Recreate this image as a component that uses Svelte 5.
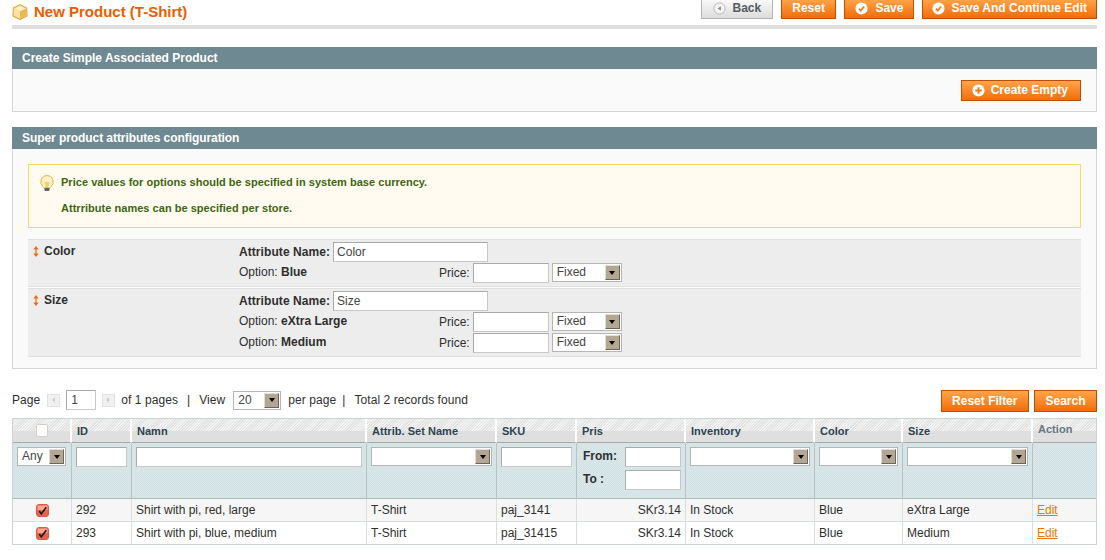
<script lang="ts">
  const rows = [
    { id: 292, name: 'Shirt with pi, red, large', set: 'T-Shirt', sku: 'paj_3141', price: 'SKr3.14', stock: 'In Stock', color: 'Blue', size: 'eXtra Large' },
    { id: 293, name: 'Shirt with pi, blue, medium', set: 'T-Shirt', sku: 'paj_31415', price: 'SKr3.14', stock: 'In Stock', color: 'Blue', size: 'Medium' }
  ];
  const heads = [
    ['ID', 'c-id'],
    ['Namn', 'c-name'],
    ['Attrib. Set Name', 'c-set'],
    ['SKU', 'c-sku'],
    ['Pris', 'c-price'],
    ['Inventory', 'c-stock'],
    ['Color', 'c-color'],
    ['Size', 'c-size']
  ];
</script>

{#snippet select(label: string, cls: string)}
  <span class="select {cls}">
    <span class="select-text">{label}</span>
    <span class="select-btn"><i></i></span>
  </span>
{/snippet}

{#snippet sorter()}
  <svg class="sorter" viewBox="0 0 6 11" width="6" height="11">
    <path d="M3 0 5.6 3.4H.4zM3 11 .4 7.6h5.2z" fill="#f26a0c" />
    <rect x="2.4" y="3" width="1.2" height="5" fill="#f26a0c" />
  </svg>
{/snippet}

{#snippet tick()}
  <svg class="ico" viewBox="0 0 14 14" width="13" height="13">
    <circle cx="7" cy="7" r="6.5" fill="#fff" />
    <path d="M4.2 7.2 6.2 9.4 9.8 4.8" fill="none" stroke="#ec7a14" stroke-width="1.8" />
  </svg>
{/snippet}

<div class="page">
  <header class="top">
    <h3>
      <svg viewBox="0 0 16 16" width="16" height="16">
        <path d="M8 .7 14.6 3.9 15 12 8 15.4 1 12 1.4 3.9z" fill="#f3cb74" stroke="#dca945" stroke-width="1.1" stroke-linejoin="round" />
        <path d="M2.2 4.4 8 7.2 13.8 4.4 8 1.6z" fill="#fdf0c4" />
        <path d="M8 7.6V14.4L2 11.5V5z" fill="#fae3a6" />
        <path d="M8 7.6V14.4l6-2.9V5z" fill="#ecb950" />
      </svg>
      New Product (T-Shirt)
    </h3>
    <div class="actions">
      <button class="btn back">
        <svg class="ico" viewBox="0 0 14 14" width="13" height="13">
          <circle cx="7" cy="7" r="6" fill="#f4f4f4" stroke="#b5b5b5" />
          <path d="M8.5 4.5v5L5 7z" fill="#8a8a8a" />
        </svg>
        Back
      </button>
      <button class="btn reset">Reset</button>
      <button class="btn">{@render tick()} Save</button>
      <button class="btn wide">{@render tick()} Save And Continue Edit</button>
    </div>
  </header>

  <section class="box first">
    <h4>Create Simple Associated Product</h4>
    <div class="box-body create">
      <button class="btn">
        <svg class="ico" viewBox="0 0 14 14" width="13" height="13">
          <circle cx="7" cy="7" r="6.5" fill="#fff" />
          <path d="M7 3.5v7M3.500 7h7" stroke="#ec7a14" stroke-width="2" />
        </svg>
        Create Empty
      </button>
    </div>
  </section>

  <section class="box second">
    <h4>Super product attributes configuration</h4>
    <div class="box-body config">
      <div class="notice">
        <svg class="bulb" viewBox="0 0 14 16" width="14" height="16">
          <path d="M7 .6a6.3 6.300 0 0 0-4 11.100c.7.600 1 1 1 1.500h6c0-.5.300-.9 1-1.500A6.300 6.300 0 0 0 7 .6z" fill="#fef3c4" stroke="#eab04a" />
          <path d="M4.500 7.500C5 10 5.500 11 6 12.500h2c.5-1.500 1-2.500 1.500-5-1.500-1-3.500-1-5 0z" fill="#f9cf6a" />
          <rect x="4.500" y="12.800" width="5" height="3.200" rx="1" fill="#5e6263" />
        </svg>
        <div class="notice-text">
          <p>Price values for options should be specified in system base currency.</p>
          <p>Attrribute names can be specified per store.</p>
        </div>
      </div>

      <div class="attr">
        <div class="attr-title">{@render sorter()}<b>Color</b></div>
        <div class="attr-fields">
          <div class="attr-name"><b>Attribute Name:</b><span class="input name-input">Color</span></div>
          <div class="opt">
            <span class="opt-label">Option: <b>Blue</b></span>
            <span class="price-label">Price:</span><span class="input price-input"></span>
            {@render select('Fixed', 's-fixed')}
          </div>
        </div>
      </div>
      <div class="attr">
        <div class="attr-title">{@render sorter()}<b>Size</b></div>
        <div class="attr-fields">
          <div class="attr-name"><b>Attribute Name:</b><span class="input name-input">Size</span></div>
          <div class="opt">
            <span class="opt-label">Option: <b>eXtra Large</b></span>
            <span class="price-label">Price:</span><span class="input price-input"></span>
            {@render select('Fixed', 's-fixed')}
          </div>
          <div class="opt">
            <span class="opt-label">Option: <b>Medium</b></span>
            <span class="price-label">Price:</span><span class="input price-input"></span>
            {@render select('Fixed', 's-fixed')}
          </div>
        </div>
      </div>
    </div>
  </section>

  <div class="pager">
    <div class="pager-left">
      <span class="page-word">Page</span>
      <span class="arrow"><i class="left"></i></span>
      <span class="input page-input">1</span>
      <span class="arrow"><i class="right"></i></span>
      <span>of 1 pages</span>
      <span class="sep">|</span>
      <span>View</span>
      {@render select('20', 's-view')}
      <span>per page</span>
      <span class="sep tight">|</span>
      <span>Total 2 records found</span>
    </div>
    <div class="pager-right">
      <button class="btn">Reset Filter</button>
      <button class="btn">Search</button>
    </div>
  </div>

  <table>
    <colgroup>
      <col class="c-check" />
      {#each heads as h}<col class={h[1]} />{/each}
      <col class="c-action" />
    </colgroup>
    <thead>
      <tr class="headings">
        <th class="center"><span class="checkbox-empty"></span></th>
        {#each heads as h}<th>{h[0]}</th>{/each}
        <th class="action-head">Action</th>
      </tr>
      <tr class="filter">
        <th>{@render select('Any', 's-any')}</th>
        <th><span class="input f-input"></span></th>
        <th><span class="input f-input"></span></th>
        <th>{@render select('', 's-full')}</th>
        <th><span class="input f-input"></span></th>
        <th>
          <div class="range"><b>From:</b><span class="input range-input"></span></div>
          <div class="range"><b>To :</b><span class="input range-input"></span></div>
        </th>
        <th>{@render select('', 's-full')}</th>
        <th>{@render select('', 's-full')}</th>
        <th>{@render select('', 's-full')}</th>
        <th></th>
      </tr>
    </thead>
    <tbody>
      {#each rows as r}
        <tr>
          <td class="center">
            <svg class="checked" viewBox="0 0 13 13" width="13" height="13">
              <rect x=".5" y=".5" width="12" height="12" rx="2.500" fill="#ee5f4c" stroke="#dd5a45" />
              <path d="M1.500 2.500a1 1 0 0 1 1-1h8a1 1 0 0 1 1 1v3.500h-10z" fill="#f8a594" />
              <path d="M3.200 7 5.300 9.800 10.300 3.200" fill="none" stroke="#1c1c1c" stroke-width="1.600" />
            </svg>
          </td>
          <td>{r.id}</td>
          <td>{r.name}</td>
          <td>{r.set}</td>
          <td>{r.sku}</td>
          <td class="right">{r.price}</td>
          <td>{r.stock}</td>
          <td>{r.color}</td>
          <td>{r.size}</td>
          <td><span class="edit">Edit</span></td>
        </tr>
      {/each}
    </tbody>
  </table>
</div>

<style>
  :global(body) {
    background: #fff;
  }

  .page {
    height: 560px;
    overflow: hidden;
    padding: 0 8px 0 12px;
    font: 12px/15px "Liberation Sans", Arial, sans-serif;
    color: #2f2f2f;
  }

  b {
    font-weight: bold;
  }

  .ico {
    flex-shrink: 0;
  }

  /* top bar */
  .top {
    display: flex;
    justify-content: space-between;
    align-items: flex-end;
    height: 25px;
    border-bottom: 4px solid #dfdfdf;
    margin-bottom: 18px;
  }

  h3 {
    display: flex;
    align-items: center;
    gap: 6px;
    margin: 0 0 5px;
    height: 16px;
    font-size: 15px;
    line-height: 16px;
    color: #eb5e00;
  }

  .actions {
    display: flex;
    gap: 8px;
    margin-bottom: 6px;
    height: 21px;
    align-self: flex-end;
  }

  .btn {
    display: inline-flex;
    align-items: center;
    justify-content: center;
    gap: 7px;
    height: 21px;
    padding: 0 10px;
    border: 1px solid #c24d00;
    background: linear-gradient(#ffa54a, #f36d0a);
    color: #fff;
    font: bold 12px/15px "Liberation Sans", Arial, sans-serif;
    white-space: nowrap;
  }

  .back {
    border-color: #b4b4b4;
    background: linear-gradient(#fafafa, #dcdcdc);
    color: #555a63;
  }

  .back,
  .reset {
    padding: 0 10.5px;
  }

  .wide {
    padding: 0 9px;
    gap: 6px;
  }

  /* sections */
  .box {
    margin-bottom: 15px;
  }

  .box h4 {
    margin: 0;
    height: 22px;
    padding: 0 10px;
    background: #6f8992;
    color: #fff;
    font-size: 12px;
    line-height: 22px;
  }

  .second h4 {
    letter-spacing: -0.07px;
  }

  .box-body {
    background: #fafafa;
    border: 1px solid #d6d6d6;
    border-top: 0;
  }

  .create {
    display: flex;
    justify-content: flex-end;
    height: 43px;
    box-sizing: border-box;
    padding: 11px 15px 0 0;
  }

  .create .btn {
    gap: 6px;
    padding: 0 12px 0 10px;
  }

  .config {
    height: 220px;
    box-sizing: border-box;
    padding: 15px 15px 0;
  }

  .notice {
    display: flex;
    gap: 7px;
    height: 64px;
    box-sizing: border-box;
    padding: 10px 11px;
    background: #fffbf0;
    border: 1px solid #ffd967;
    margin-bottom: 11px;
  }

  .bulb {
    flex-shrink: 0;
  }

  .notice-text p {
    margin: 0 0 11px;
    color: #3d6611;
    font-size: 11px;
    font-weight: bold;
    line-height: 15px;
    letter-spacing: 0.03px;
  }

  .attr {
    display: flex;
    background: #ededed;
    border: 1px solid #e0e0e0;
    border-width: 1px 0;
    margin-bottom: 1px;
    padding: 2px 0;
  }

  .attr-title {
    display: flex;
    align-items: center;
    align-self: flex-start;
    gap: 5px;
    width: 211px;
    padding: 2px 0 0 5px;
    box-sizing: border-box;
  }

  .attr-name {
    display: flex;
    align-items: flex-start;
    gap: 3px;
    height: 21px;
  }

  .attr-name b {
    line-height: 20px;
    letter-spacing: 0.07px;
  }

  .opt {
    display: flex;
    align-items: flex-start;
    height: 21px;
  }

  .opt-label {
    width: 200px;
    line-height: 18px;
  }

  .price-label {
    margin-right: 3px;
    line-height: 20px;
  }

  /* form bits */
  .input {
    display: inline-block;
    box-sizing: border-box;
    background: #fff;
    border: 1px solid #aaa;
    border-color: #aaa #c8c8c8 #c8c8c8 #aaa;
    padding: 0 3px;
    height: 20px;
    line-height: 18px;
    vertical-align: middle;
    color: #444;
  }

  .name-input {
    width: 155px;
  }

  .price-input {
    width: 76px;
  }

  .select {
    display: inline-flex;
    align-items: center;
    justify-content: space-between;
    box-sizing: border-box;
    height: 19px;
    background: #fff;
    border: 1px solid #b5b5b5;
    padding-left: 4px;
    font-weight: normal;
    line-height: 16px;
    color: #444;
  }

  .select-text {
    flex: 1;
    margin-top: -1px;
  }

  .select-btn {
    display: flex;
    align-items: center;
    justify-content: center;
    width: 15px;
    height: 15px;
    margin-right: 1px;
    background: #b3a692;
    border: 1px solid;
    border-color: #e3ded5 #6d6455 #6d6455 #e3ded5;
    box-sizing: border-box;
  }

  .select-btn i {
    width: 0;
    height: 0;
    border: 3px solid transparent;
    border-top: 4px solid #000;
    border-bottom: 0;
  }

  .s-fixed {
    width: 70px;
    margin-left: 3px;
  }

  .s-view {
    width: 48px;
    margin: 0 1px 0 2px;
  }

  .s-any {
    width: 49px;
  }

  .s-full {
    display: flex;
    width: 100%;
  }

  /* pager */
  .pager {
    display: flex;
    justify-content: space-between;
    align-items: flex-start;
    margin-top: 21px;
    height: 28px;
  }

  .pager-left {
    display: flex;
    align-items: center;
    height: 20px;
    gap: 6px;
    letter-spacing: 0.07px;
  }

  .page-word {
    margin-right: 1px;
  }

  .page-input {
    width: 30px;
    padding-left: 4px;
  }

  .arrow {
    display: flex;
    align-items: center;
    justify-content: center;
    width: 13px;
    height: 13px;
    background: #f1f1f1;
    border: 1px solid #e2e2e2;
    box-sizing: border-box;
  }

  .arrow i {
    width: 0;
    height: 0;
    border: 3px solid transparent;
  }

  .arrow .left {
    border-left: 0;
    border-right: 3px solid #cfcfcf;
  }

  .arrow .right {
    border-right: 0;
    border-left: 3px solid #cfcfcf;
  }

  .sep {
    margin: 0 3px;
  }

  .sep.tight {
    margin-left: 0;
  }

  .pager-right {
    display: flex;
    gap: 5px;
  }

  .pager-right .btn {
    height: 22px;
    padding: 0 10.5px;
  }

  /* grid */
  table {
    width: 1085px;
    table-layout: fixed;
    border-collapse: separate;
    border-spacing: 0;
    border: 1px solid #cbd3d4;
  }

  .c-check { width: 59px; }
  .c-id { width: 60px; }
  .c-name { width: 235px; }
  .c-set { width: 130px; }
  .c-sku { width: 80px; }
  .c-price { width: 109px; }
  .c-stock { width: 129px; }
  .c-color { width: 88px; }
  .c-size { width: 130px; }
  .c-action { width: 63px; }

  th {
    padding: 0;
    text-align: left;
  }

  .headings th {
    height: 24px;
    padding: 0 4px 0 5px;
    box-sizing: border-box;
    border-right: 2px solid #fff;
    border-bottom: 1px solid #a9a9a9;
    font-size: 11px;
    line-height: 22px;
    color: #2d4452;
    letter-spacing: 0.03px;
    background:
      repeating-linear-gradient(135deg, #f3f3f3 0 1px, #e2e2e2 1px 2px) top / 100% 12px no-repeat,
      #dfdfdf;
  }

  .headings th:last-child {
    border-right: 0;
  }

  .headings .action-head {
    color: #67767f;
    line-height: 21px;
    vertical-align: top;
  }

  .checkbox-empty {
    display: block;
    width: 10px;
    height: 11px;
    margin: 0 auto;
    background: #fff;
    border: 1px solid #d5cfc2;
    border-radius: 2px;
  }

  .filter th {
    height: 56px;
    box-sizing: border-box;
    vertical-align: top;
    padding: 4px 4px 0;
    border-right: 1px solid #b9c1c2;
    border-bottom: 1px solid #b2b8b9;
    background: repeating-conic-gradient(#d2e1e3 0 25%, #dbe8ea 0 50%) 0 0 / 2px 2px;
  }

  .filter th:last-child {
    border-right: 0;
  }

  .f-input {
    display: block;
    width: 100%;
  }

  .range {
    display: flex;
    justify-content: space-between;
    align-items: flex-start;
    height: 23px;
    padding-left: 2px;
  }

  .range b {
    line-height: 19px;
  }

  .range-input {
    width: 56px;
  }

  td {
    height: 23px;
    box-sizing: border-box;
    padding: 0 4px;
    border-right: 1px solid #dadfe0;
    border-bottom: 1px solid #dadfe0;
    white-space: nowrap;
  }

  td:last-child {
    border-right: 0;
  }

  tbody tr:last-child td {
    height: 22px;
    border-bottom: 0;
  }

  tbody tr:nth-child(1) td {
    background: #f6f6f6;
  }

  .center {
    text-align: center;
  }

  .right {
    text-align: right;
  }

  .checked {
    display: block;
    margin: 0 auto;
  }

  .edit {
    color: #ea7601;
    text-decoration: underline;
  }
</style>
